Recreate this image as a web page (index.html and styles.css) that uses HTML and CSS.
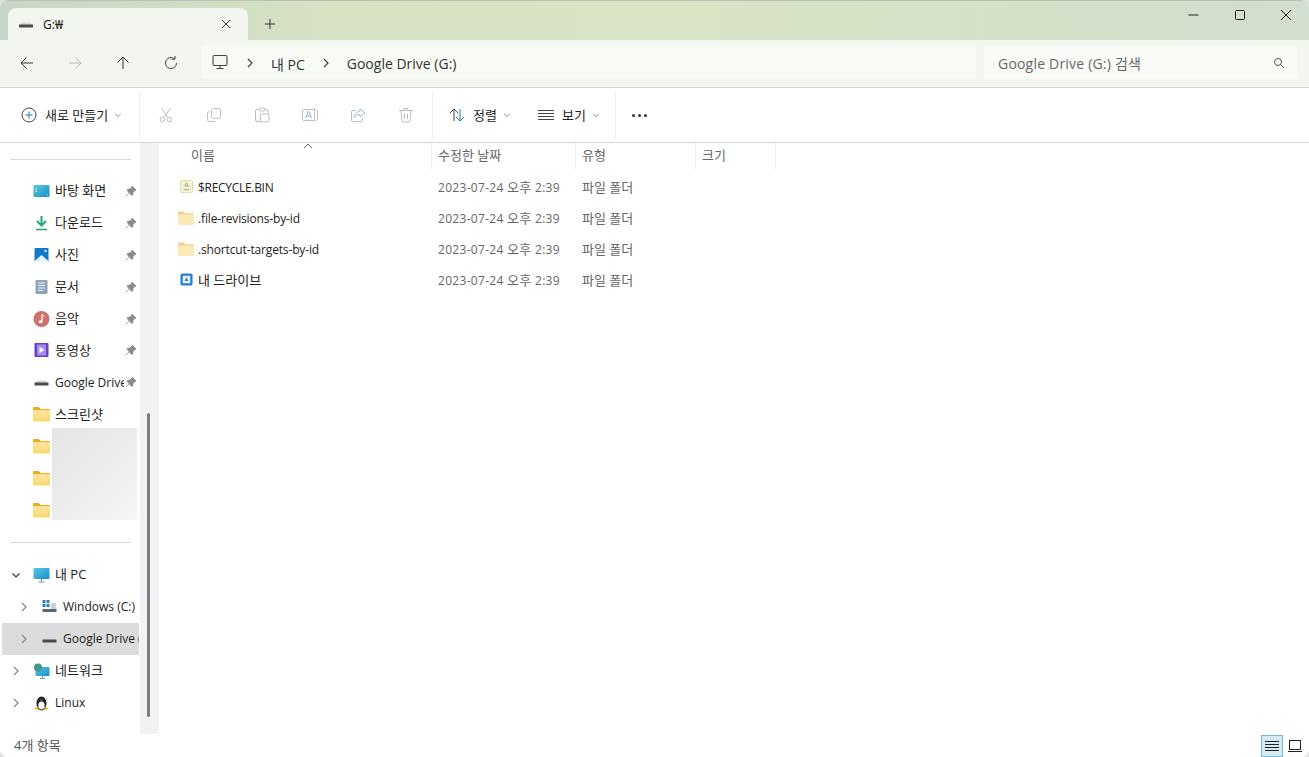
FILE: index.html
```html
<!DOCTYPE html>
<html lang="ko">
<head>
<meta charset="utf-8">
<title>G:₩</title>
<link rel="stylesheet" href="styles.css">
</head>
<body>
<svg class="defs" width="0" height="0" aria-hidden="true">
  <defs>
    <linearGradient id="fold" x1="0" y1="0" x2="0" y2="1"><stop offset="0" stop-color="#fde7a0"/><stop offset="1" stop-color="#fcd56c"/></linearGradient>
    <linearGradient id="screen" x1="0" y1="0" x2="1" y2="1"><stop offset="0" stop-color="#58c8e8"/><stop offset="1" stop-color="#1c8cc4"/></linearGradient>
    <symbol id="drive" viewBox="0 0 16 16"><path d="M4 6.500h8l2.500 2.500H1.500z" fill="#d9d9d9"/><rect x="1" y="8.500" width="14" height="3" rx=".5" fill="#4a4a4a"/></symbol>
    <symbol id="folder" viewBox="0 0 16 14"><path d="M0 1.500a1 1 0 0 1 1-1h4.500l1.800 1.700H15a1 1 0 0 1 1 1V4H0z" fill="#e9ad2a"/><path d="M0 3.500h16V13a1 1 0 0 1-1 1H1a1 1 0 0 1-1-1z" fill="url(#fold)"/></symbol>
    <symbol id="folder-pale" viewBox="0 0 16 14"><path d="M0 1.500a1 1 0 0 1 1-1h4.500l1.800 1.700H15a1 1 0 0 1 1 1V4H0z" fill="#efd28a"/><path d="M0 3.500h16V13a1 1 0 0 1-1 1H1a1 1 0 0 1-1-1z" fill="#fbeab8"/></symbol>
    <symbol id="pin" viewBox="0 0 12 12"><path d="M7 1l4 4-1 .5-2 2-.3 2.500-1 .5L2 5.300l.5-1 2.500-.3 2-2zM4 8l-3 3" fill="#8c8c8c" stroke="#8c8c8c" stroke-width=".8"/></symbol>
    <symbol id="chev-r" viewBox="0 0 10 10"><path d="M3 1l4 4-4 4" fill="none" stroke="currentColor" stroke-width="1.200"/></symbol>
    <symbol id="chev-d" viewBox="0 0 10 10"><path d="M1.500 3.500L5 7l3.500-3.500" fill="none" stroke="currentColor" stroke-width="1.200"/></symbol>
  </defs>
</svg>

<div class="window">
  <header class="titlebar">
    <div class="tab">
      <svg class="tab-icon"><use href="#drive"/></svg>
      <span class="tab-label">G:₩</span>
      <svg class="tab-close" viewBox="0 0 12 12"><path d="M2 2l8 8M10 2l-8 8" stroke="#333" stroke-width="1" fill="none"/></svg>
    </div>
    <svg class="tab-add" viewBox="0 0 12 12"><path d="M6 1v10M1 6h10" stroke="#333" stroke-width="1" fill="none"/></svg>
    <div class="window-controls">
      <svg class="win-btn" viewBox="0 0 12 12"><path d="M.5 6h10" stroke="#222" stroke-width="1" fill="none"/></svg>
      <svg class="win-btn" viewBox="0 0 12 12"><rect x="1.500" y="1.500" width="9" height="9" rx="1" stroke="#222" stroke-width="1" fill="none"/></svg>
      <svg class="win-btn" viewBox="0 0 12 12"><path d="M1 1l10 10M11 1L1 11" stroke="#222" stroke-width="1" fill="none"/></svg>
    </div>
  </header>

  <nav class="addressbar">
    <div class="nav-buttons">
      <svg class="nav-btn" viewBox="0 0 16 16"><path d="M14 8H2M7.500 2.500L2 8l5.500 5.500" stroke="#333" fill="none"/></svg>
      <svg class="nav-btn" viewBox="0 0 16 16"><path d="M2 8h12M8.500 2.500L14 8l-5.500 5.500" stroke="#b4b8b0" fill="none"/></svg>
      <svg class="nav-btn" viewBox="0 0 16 16"><path d="M8 14V2M2.500 7.500L8 2l5.500 5.500" stroke="#333" fill="none"/></svg>
      <svg class="nav-btn" viewBox="0 0 16 16"><path d="M13.500 8A5.500 5.500 0 1 1 11.500 3.800M12 1v3.200H8.800" stroke="#444" fill="none"/></svg>
    </div>
    <div class="crumbs">
      <svg class="crumb-pc" viewBox="0 0 16 16"><rect x="1" y="1.500" width="14" height="10" rx="1.500" fill="#f4f6f0" stroke="#444" stroke-width="1.100"/><path d="M8 11.500v2.500M4.500 14.500h7" stroke="#444" stroke-width="1.100"/></svg>
      <svg class="crumb-sep"><use href="#chev-r"/></svg>
      <span class="crumb">내 PC</span>
      <svg class="crumb-sep"><use href="#chev-r"/></svg>
      <span class="crumb">Google Drive (G:)</span>
    </div>
    <div class="search">
      <span class="search-text">Google Drive (G:) 검색</span>
      <svg class="search-icon" viewBox="0 0 12 12"><circle cx="5" cy="5" r="3.500" stroke="#555" fill="none"/><path d="M7.500 7.500L11 11" stroke="#555"/></svg>
    </div>
  </nav>

  <div class="toolbar">
    <div class="tool-group group-new">
      <svg class="tool-icon" viewBox="0 0 16 16"><circle cx="8" cy="8" r="7" fill="none" stroke="#444"/><path d="M8 4.500v7M4.500 8h7" stroke="#1a78c2"/></svg>
      <span class="tool-label">새로 만들기</span>
      <svg class="tool-chev"><use href="#chev-d"/></svg>
    </div>
    <div class="tool-group group-edit">
      <svg class="tool-icon" viewBox="0 0 16 16"><path d="M3.500 1l6 9M12.500 1l-6 9" stroke="#b9c0c4" fill="none"/><circle cx="4.500" cy="12.500" r="2.300" stroke="#b9c0c4" fill="none"/><circle cx="11.500" cy="12.500" r="2.300" stroke="#b9c0c4" fill="none"/></svg>
      <svg class="tool-icon" viewBox="0 0 16 16"><rect x="5.500" y="1.500" width="9" height="10" rx="2" stroke="#b9c0c4" fill="none"/><path d="M3.500 4.500a2 2 0 0 0-2 2v6a2 2 0 0 0 2 2h6" stroke="#b9c0c4" fill="none"/></svg>
      <svg class="tool-icon" viewBox="0 0 16 16"><path d="M5 2.500H3a1.500 1.500 0 0 0-1.500 1.500v9A1.500 1.500 0 0 0 3 14.500h3M11 2.500h1.500A1.500 1.500 0 0 1 14 4v3" stroke="#b9c0c4" fill="none"/><rect x="5" y="1" width="6" height="3" rx="1" stroke="#b9c0c4" fill="none"/><rect x="6.500" y="7" width="8.500" height="8" rx="1" stroke="#b9c0c4" fill="none"/></svg>
      <svg class="tool-icon" viewBox="0 0 16 16"><path d="M12 2.500H2A1.500 1.500 0 0 0 .5 4v8A1.500 1.500 0 0 0 2 13.500h10" stroke="#b9c0c4" fill="none"/><path d="M3.500 11l3-7 3 7M4.500 9h4" stroke="#8fb4d0" fill="none"/><path d="M12.500 1v14M14 2.500c1 0 1.500.7 1.500 1.500v8c0 .8-.5 1.500-1.500 1.500" stroke="#b9c0c4" fill="none"/></svg>
      <svg class="tool-icon" viewBox="0 0 16 16"><path d="M6 3.500H3A1.500 1.500 0 0 0 1.500 5v8A1.500 1.500 0 0 0 3 14.500h8a1.500 1.500 0 0 0 1.500-1.500v-2" stroke="#b9c0c4" fill="none"/><path d="M10 2l5 4-5 4V7.500c-3 0-4.500 1-5.500 3 0-3.500 2-6 5.500-6z" stroke="#9fc0d6" fill="none"/></svg>
      <svg class="tool-icon" viewBox="0 0 16 16"><path d="M1 3.500h14M6 3.500V1.500h4v2M3 3.500l.8 10a1.500 1.500 0 0 0 1.500 1.500h5.400a1.500 1.500 0 0 0 1.500-1.500l.8-10M6.500 6.500v5.500M9.500 6.500v5.500" stroke="#b9c0c4" fill="none"/></svg>
    </div>
    <div class="tool-group group-view">
      <div class="tool-item item-sort">
        <svg class="tool-icon" viewBox="0 0 16 16"><path d="M5 14V2M1 6l4-4 4 4" stroke="#444" fill="none"/><path d="M11 2v12M7 10l4 4 4-4" stroke="#1a78c2" fill="none"/></svg>
        <span class="tool-label">정렬</span>
        <svg class="tool-chev"><use href="#chev-d"/></svg>
      </div>
      <div class="tool-item item-view">
        <svg class="tool-icon" viewBox="0 0 16 16"><path d="M0 3.500h16M0 6.500h16M0 9.500h16M0 12.500h16" stroke="#444" fill="none"/></svg>
        <span class="tool-label">보기</span>
        <svg class="tool-chev"><use href="#chev-d"/></svg>
      </div>
    </div>
    <div class="more"><i></i><i></i><i></i></div>
  </div>

  <main class="content">
    <aside class="sidebar">
      <div class="tree">
        <hr class="tree-divider first">
        <div class="tree-row"><svg class="tree-icon" viewBox="0 0 16 16"><rect y="2" width="16" height="12" rx="1" fill="url(#screen)"/><path d="M2 6h1.500M2 8.500h1.500M13 12h1" stroke="#fff"/></svg><span class="ko">바탕 화면</span><svg class="tree-pin"><use href="#pin"/></svg></div>
        <div class="tree-row"><svg class="tree-icon" viewBox="0 0 16 16"><path d="M8 1v9M3.500 6L8 10.500 12.500 6" stroke="#2aa67f" stroke-width="2" fill="none"/><path d="M2.500 14.500h11" stroke="#2aa67f" stroke-width="1.500"/></svg><span class="ko">다운로드</span><svg class="tree-pin"><use href="#pin"/></svg></div>
        <div class="tree-row"><svg class="tree-icon" viewBox="0 0 16 16"><rect x="1" y="1" width="14" height="14" rx="1" fill="#1478c8"/><path d="M1 14l7-6 7 6v1H1z" fill="#e8f4fc"/><circle cx="12" cy="4" r="1.300" fill="#bfe4fa"/></svg><span class="ko">사진</span><svg class="tree-pin"><use href="#pin"/></svg></div>
        <div class="tree-row"><svg class="tree-icon" viewBox="0 0 16 16"><rect x="2" y="1" width="12" height="14" rx="1" fill="#8ba4b8"/><path d="M4.500 4h7M4.500 6.500h7M4.500 9h7M4.500 11.500h5" stroke="#eef3f7"/></svg><span class="ko">문서</span><svg class="tree-pin"><use href="#pin"/></svg></div>
        <div class="tree-row"><svg class="tree-icon" viewBox="0 0 16 16"><circle cx="8" cy="8" r="8" fill="#d0706a"/><path d="M8.500 3.500v7" stroke="#fff" stroke-width="1.200"/><path d="M8.500 3.500c1 1 2 1 2.500 2" stroke="#fff" fill="none"/><ellipse cx="7" cy="10.700" rx="2" ry="1.500" fill="#fff"/></svg><span class="ko">음악</span><svg class="tree-pin"><use href="#pin"/></svg></div>
        <div class="tree-row"><svg class="tree-icon" viewBox="0 0 16 16"><rect x="1" y="1" width="14" height="14" rx="1" fill="#6a3fc4"/><rect x="3.500" y="2.500" width="9" height="11" fill="#a98be8"/><path d="M6 5l5 3-5 3z" fill="#fff"/></svg><span class="ko">동영상</span><svg class="tree-pin"><use href="#pin"/></svg></div>
        <div class="tree-row"><svg class="tree-icon"><use href="#drive"/></svg><span class="tree-clip">Google Drive</span><svg class="tree-pin"><use href="#pin"/></svg></div>
        <div class="tree-row"><svg class="tree-icon"><use href="#folder"/></svg><span class="ko">스크린샷</span></div>
        <div class="tree-row"><svg class="tree-icon"><use href="#folder"/></svg></div>
        <div class="tree-row"><svg class="tree-icon"><use href="#folder"/></svg></div>
        <div class="tree-row"><svg class="tree-icon"><use href="#folder"/></svg></div>
        <hr class="tree-divider second">
        <div class="tree-row low"><svg class="tree-arrow dark"><use href="#chev-d"/></svg><svg class="tree-icon" viewBox="0 0 16 16"><rect y="1" width="16" height="11" rx="1" fill="url(#screen)"/><path d="M8 12v2.500M5 15h6" stroke="#7b98a8"/></svg><span class="ko">내 PC</span></div>
        <div class="tree-row low level2"><svg class="tree-arrow"><use href="#chev-r"/></svg><svg class="tree-icon" viewBox="0 0 16 16"><path d="M1 1h3v3H1zM5 1h3v3H5zM1 5h3v3H1zM5 5h3v3H5z" fill="#2a7fc4"/><rect x="1" y="10" width="14" height="3" fill="#5a6670"/><path d="M10 4h4l1 6H9z" fill="#c5d2da"/></svg><span class="tree-clip">Windows (C:)</span></div>
        <div class="tree-row low level2 selected"><svg class="tree-arrow"><use href="#chev-r"/></svg><svg class="tree-icon"><use href="#drive"/></svg><span class="tree-clip">Google Drive (G:)</span></div>
        <div class="tree-row low"><svg class="tree-arrow"><use href="#chev-r"/></svg><svg class="tree-icon" viewBox="0 0 16 16"><rect x="2" y="4" width="14" height="9" rx="1" fill="url(#screen)"/><path d="M9 13v2M6.500 15.500h5" stroke="#7b98a8"/><circle cx="4.500" cy="4.500" r="4" fill="#3e9a8e"/></svg><span class="ko">네트워크</span></div>
        <div class="tree-row low"><svg class="tree-arrow"><use href="#chev-r"/></svg><svg class="tree-icon" viewBox="0 0 16 16"><ellipse cx="8" cy="8.500" rx="5" ry="7" fill="#222"/><ellipse cx="8" cy="10.500" rx="3.200" ry="4" fill="#f5f5f5"/><path d="M6.500 4l1.500 1 1.500-1-1.500 2z" fill="#e8a91f"/><path d="M.5 14l4-2.500 1 3.500zM15.500 14l-4-2.500-1 3.500z" fill="#e8a91f"/></svg><span>Linux</span></div>
      </div>
      <div class="blur-patch"></div>
    </aside>
    <div class="scroll-track"><div class="scroll-thumb"></div></div>

    <section class="files">
      <div class="file-head">
        <div class="col col-name">이름<svg class="sort-mark" viewBox="0 0 10 6"><path d="M1 5l4-4 4 4" stroke="#666" fill="none"/></svg></div>
        <div class="col col-date">수정한 날짜</div>
        <div class="col col-type">유형</div>
        <div class="col col-size">크기</div>
      </div>
      <div class="file-row">
        <div class="cell-name"><svg class="file-icon" viewBox="0 0 14 14"><rect x=".5" y=".5" width="13" height="13" rx="1" fill="#f6f3cf" stroke="#dcd9a8"/><path d="M7 3L5 6.500h4zM4 10.500h6" stroke="#9ba3a8" fill="none"/></svg><span class="name tight">$RECYCLE.BIN</span></div>
        <div class="cell-date">2023-07-24 <span class="ko-inline">오후</span> 2:39</div><div class="cell-type">파일 폴더</div>
      </div>
      <div class="file-row">
        <div class="cell-name"><svg class="file-icon folder-wide"><use href="#folder-pale"/></svg><span class="name">.file-revisions-by-id</span></div>
        <div class="cell-date">2023-07-24 <span class="ko-inline">오후</span> 2:39</div><div class="cell-type">파일 폴더</div>
      </div>
      <div class="file-row">
        <div class="cell-name"><svg class="file-icon folder-wide"><use href="#folder-pale"/></svg><span class="name">.shortcut-targets-by-id</span></div>
        <div class="cell-date">2023-07-24 <span class="ko-inline">오후</span> 2:39</div><div class="cell-type">파일 폴더</div>
      </div>
      <div class="file-row">
        <div class="cell-name"><svg class="file-icon" viewBox="0 0 14 14"><rect x=".5" y=".5" width="13" height="13" rx="2" fill="#2b7fd0"/><rect x="3" y="3" width="8" height="8" fill="#e8f2fb"/><path d="M7 4.500L5 8.500h4z" fill="#2b7fd0"/></svg><span class="ko-inline">내 드라이브</span></div>
        <div class="cell-date">2023-07-24 <span class="ko-inline">오후</span> 2:39</div><div class="cell-type">파일 폴더</div>
      </div>
    </section>
  </main>

  <footer class="statusbar">
    <span class="status-text">4개 항목</span>
    <div class="view-switch">
      <div class="view-btn active"><svg viewBox="0 0 14 14"><path d="M0 2.500h14M0 5.500h14M0 8.500h14M0 11.500h14" stroke="#222" fill="none"/></svg></div>
      <div class="view-btn"><svg viewBox="0 0 14 14"><rect x="1.500" y="1.500" width="11" height="9" stroke="#222" fill="none"/><path d="M0 12.500h14" stroke="#222"/></svg></div>
    </div>
  </footer>
</div>
</body>
</html>
```
FILE: styles.css
```css
* { box-sizing: border-box; }
html, body { margin: 0; height: 100%; background: #dfe2dd; overflow: hidden; }
body { font-family: "Open Sans", "Noto Sans CJK KR", sans-serif; font-size: 12px; color: #222; }
.defs { position: absolute; }
.window { width: 1309px; height: 757px; display: flex; flex-direction: column; background: #fff; border-radius: 8px; overflow: hidden; }
.ko { font-size: 13px; padding-bottom: 2px; }
.ko-inline { font-size: 13px; }

.titlebar { height: 40px; flex: none; display: flex; align-items: flex-end; padding-left: 8px; position: relative;
  background: linear-gradient(90deg, #c8d6c8 0, #d6e2c2 25%, #d9e4c4 50%, #d4e1c8 78%, #d2decf 100%); border-top: 1px solid #b9c2b4; }
.tab { width: 240px; height: 32px; background: #f3f6ee; border-radius: 8px 8px 0 0; display: flex; align-items: center; padding: 0 16px 0 10px; }
.tab-icon { width: 16px; height: 16px; margin-right: 9px; }
.tab-label { flex: 1; font-size: 12px; color: #222; font-family: "Noto Sans", "Noto Sans CJK KR", sans-serif; }
.tab-close { width: 12px; height: 12px; }
.tab-add { width: 12px; height: 12px; margin: 0 0 10px 16px; }
.window-controls { margin-left: auto; display: flex; align-self: flex-start; padding: 8px 17px 0 0; gap: 34px; }
.win-btn { width: 12px; height: 12px; }

.addressbar { height: 48px; flex: none; display: flex; align-items: center; padding: 0 12px 2px 19px; background: #f3f6ee; border-bottom: 1px solid #d8dad4; }
.nav-buttons { display: flex; gap: 32px; width: 183px; }
.nav-btn { width: 16px; height: 16px; }
.crumbs { width: 774px; height: 33px; background: #f8faf5; display: flex; align-items: center; padding: 2px 0 0 10px; font-size: 14px; color: #333; }
.crumb-pc { width: 16px; height: 16px; margin: -3px 17px 0 0; }
.crumb-sep { width: 10px; height: 10px; margin: -2px 16px 0 0; color: #444; }
.crumb { margin-right: 16px; }
.search { width: 313px; height: 33px; margin-left: 8px; background: #f9fbf7; display: flex; align-items: center; padding: 0 12px 0 14px; font-size: 14px; color: #666; }
.search-text { flex: 1; letter-spacing: .2px; }
.search-icon { width: 12px; height: 12px; }

.toolbar { height: 55px; flex: none; display: flex; align-items: center; background: #fff; border-bottom: 1px solid #d4d4d4; }
.tool-group { height: 47px; display: flex; align-items: center; border-right: 1px solid #eeeeee; }
.tool-icon { width: 16px; height: 16px; flex: none; }
.tool-label { color: #222; margin-left: 8px; font-size: 13px; padding-bottom: 2px; }
.tool-chev { width: 8px; height: 8px; margin-left: 6px; color: #888; }
.group-new { width: 140px; padding-left: 21px; }
.group-edit { width: 293px; padding-left: 18px; gap: 32px; }
.group-view { width: 183px; padding-left: 16px; gap: 27px; }
.tool-item { display: flex; align-items: center; }
.more { display: flex; gap: 3px; margin-left: 16px; }
.more i { width: 3px; height: 3px; border-radius: 50%; background: #333; }

.content { flex: 1; min-height: 0; display: flex; }
.sidebar { width: 140px; flex: none; position: relative; padding-top: 16px; }
.tree-divider { border: 0; border-top: 1px solid #d8d8d8; margin: 0 9px 0 10px; }
.tree-divider.first { margin-bottom: 15px; }
.tree-divider.second { margin-top: 16px; margin-bottom: 16px; }
.tree-row { height: 31.9px; display: flex; align-items: center; padding-left: 33px; position: relative; white-space: nowrap; }
.tree-row.low { height: 32px; }
.tree-icon { width: 17px; height: 16px; flex: none; margin-right: 5px; }
.tree-pin { width: 12px; height: 12px; position: absolute; right: 3px; top: 10px; }
.tree-clip { display: block; width: 69px; overflow: hidden; }
.level2 { padding-left: 41px; }
.level2 .tree-clip { width: 76px; }
.tree-arrow { width: 10px; height: 10px; position: absolute; left: 11px; top: 11px; color: #888; }
.tree-arrow.dark { color: #333; }
.level2 .tree-arrow { left: 19px; }
.selected { background: #dcdcdc; margin-left: 2px; margin-right: 1px; padding-left: 39px; }
.selected .tree-arrow { left: 17px; }
.blur-patch { position: absolute; left: 52px; top: 285px; width: 85px; height: 92px; background: linear-gradient(135deg, #e6e5e5, #eeeded 55%, #f6f6f6); }

.scroll-track { width: 19px; flex: none; background: #f2f2f4; position: relative; }
.scroll-thumb { position: absolute; left: 7px; top: 270px; width: 3px; height: 304px; background: #7e7e7e; border-radius: 2px; }

.files { flex: 1; background: #fff; }
.file-head { height: 26px; display: flex; color: #666; font-size: 13px; align-items: flex-start; }
.col { height: 26px; display: flex; align-items: center; padding: 0 0 4px 6px; border-right: 1px solid #ececec; }
.col-name { width: 273px; padding-left: 32px; position: relative; }
.col-date { width: 144px; }
.col-type { width: 120px; }
.col-size { width: 80px; }
.sort-mark { position: absolute; left: 144px; top: 0; width: 10px; height: 6px; }
.file-row { height: 31px; display: flex; align-items: center; padding-top: 4px; }
.cell-name { width: 273px; display: flex; align-items: center; padding-left: 21px; color: #222; }
.name { letter-spacing: -.15px; padding-top: 2px; }
.name.tight { letter-spacing: -.3px; }
.cell-date { width: 144px; padding-left: 6px; color: #666; letter-spacing: .3px; }
.cell-type { padding-left: 6px; color: #666; font-size: 13px; }
.file-icon { width: 13px; height: 13px; margin-right: 5px; flex: none; }
.folder-wide { width: 16px; height: 14px; margin-left: -2px; margin-right: 4px; }

.statusbar { height: 23px; flex: none; display: flex; align-items: center; justify-content: space-between; padding: 0 3px 0 14px; color: #555; background: #fff; font-size: 13px; }
.status-text { padding-bottom: 2px; }
.view-switch { display: flex; gap: 1px; }
.view-btn { width: 22px; height: 22px; display: flex; align-items: center; justify-content: center; }
.view-btn svg { width: 14px; height: 14px; }
.view-btn.active { background: #d6eaf4; border: 1px solid #7ab8d8; }
```
